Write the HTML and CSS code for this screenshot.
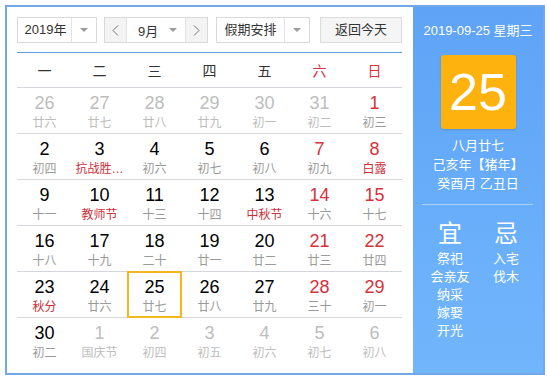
FILE: index.html
```html
<!DOCTYPE html>
<html lang="zh-CN">
<head>
    <meta charset="UTF-8">
    <title>万年历</title>
    <link rel="stylesheet" href="styles.css">
</head>
<body>
    <div class="calendar">
        <!-- Left: month grid -->
        <div class="main">
            <div class="toolbar">
                <div class="select year">
                    <span class="val">2019年</span>
                    <span class="drop"><i class="caret"></i></span>
                </div>
                <div class="month-ctl">
                    <span class="arrow">
                        <svg width="7" height="11" viewBox="0 0 7 11"><polyline points="6,0.5 1,5.5 6,10.5" fill="none" stroke="#777" stroke-width="1"/></svg>
                    </span>
                    <div class="month-val"><span>9月</span><i class="caret"></i></div>
                    <span class="arrow">
                        <svg width="7" height="11" viewBox="0 0 7 11"><polyline points="1,0.5 6,5.5 1,10.5" fill="none" stroke="#777" stroke-width="1"/></svg>
                    </span>
                </div>
                <div class="select holiday">
                    <span class="val">假期安排</span>
                    <span class="drop"><i class="caret"></i></span>
                </div>
                <div class="today-btn">返回今天</div>
            </div>

            <div class="week">
                <span>一</span><span>二</span><span>三</span><span>四</span><span>五</span>
                <span class="red">六</span><span class="red">日</span>
            </div>

            <div class="row">
                <div class="day other"><b>26</b><em>廿六</em></div>
                <div class="day other"><b>27</b><em>廿七</em></div>
                <div class="day other"><b>28</b><em>廿八</em></div>
                <div class="day other"><b>29</b><em>廿九</em></div>
                <div class="day other"><b>30</b><em>初一</em></div>
                <div class="day other"><b>31</b><em>初二</em></div>
                <div class="day weekend"><b>1</b><em>初三</em></div>
            </div>
            <div class="row">
                <div class="day"><b>2</b><em>初四</em></div>
                <div class="day"><b>3</b><em class="fest">抗战胜…</em></div>
                <div class="day"><b>4</b><em>初六</em></div>
                <div class="day"><b>5</b><em>初七</em></div>
                <div class="day"><b>6</b><em>初八</em></div>
                <div class="day weekend"><b>7</b><em>初九</em></div>
                <div class="day weekend"><b>8</b><em class="fest">白露</em></div>
            </div>
            <div class="row">
                <div class="day"><b>9</b><em>十一</em></div>
                <div class="day"><b>10</b><em class="fest">教师节</em></div>
                <div class="day"><b>11</b><em>十三</em></div>
                <div class="day"><b>12</b><em>十四</em></div>
                <div class="day"><b>13</b><em class="fest">中秋节</em></div>
                <div class="day weekend"><b>14</b><em>十六</em></div>
                <div class="day weekend"><b>15</b><em>十七</em></div>
            </div>
            <div class="row">
                <div class="day"><b>16</b><em>十八</em></div>
                <div class="day"><b>17</b><em>十九</em></div>
                <div class="day"><b>18</b><em>二十</em></div>
                <div class="day"><b>19</b><em>廿一</em></div>
                <div class="day"><b>20</b><em>廿二</em></div>
                <div class="day weekend"><b>21</b><em>廿三</em></div>
                <div class="day weekend"><b>22</b><em>廿四</em></div>
            </div>
            <div class="row">
                <div class="day"><b>23</b><em class="fest">秋分</em></div>
                <div class="day"><b>24</b><em>廿六</em></div>
                <div class="day today"><b>25</b><em>廿七</em></div>
                <div class="day"><b>26</b><em>廿八</em></div>
                <div class="day"><b>27</b><em>廿九</em></div>
                <div class="day weekend"><b>28</b><em>三十</em></div>
                <div class="day weekend"><b>29</b><em>初一</em></div>
            </div>
            <div class="row">
                <div class="day"><b>30</b><em>初二</em></div>
                <div class="day other"><b>1</b><em>国庆节</em></div>
                <div class="day other"><b>2</b><em>初四</em></div>
                <div class="day other"><b>3</b><em>初五</em></div>
                <div class="day other"><b>4</b><em>初六</em></div>
                <div class="day other"><b>5</b><em>初七</em></div>
                <div class="day other"><b>6</b><em>初八</em></div>
            </div>
        </div>

        <!-- Right: selected day detail -->
        <div class="side">
            <div class="side-date">2019-09-25 星期三</div>
            <div class="big-day">25</div>
            <div class="lunar">
                <p>八月廿七</p>
                <p>己亥年【猪年】</p>
                <p>癸酉月 乙丑日</p>
            </div>
            <div class="divider"></div>
            <div class="yiji">
                <div class="col">
                    <h3>宜</h3>
                    <p>祭祀</p>
                    <p>会亲友</p>
                    <p>纳采</p>
                    <p>嫁娶</p>
                    <p>开光</p>
                </div>
                <div class="col">
                    <h3>忌</h3>
                    <p>入宅</p>
                    <p>伐木</p>
                </div>
            </div>
        </div>
    </div>
</body>
</html>
```

FILE: styles.css
```css
body {
    margin: 0;
    padding: 0;
    background-color: #fff;
    font-family: "Liberation Sans", Arial, "Noto Sans CJK SC", sans-serif;
    color: #333;
}
.calendar {
    display: flex;
    width: 540px;
    height: 370px;
    margin: 5px;
    border: 2px solid #72a8ea;
    box-sizing: border-box;
}
.main {
    width: 406px;
    padding: 10px 11px 0 10px;
    box-sizing: border-box;
    background-color: #fff;
}

/* toolbar */
.toolbar {
    display: flex;
    height: 26px;
    margin-bottom: 9px;
    font-size: 13px;
    color: #333;
}
.select {
    display: flex;
    border: 1px solid #d9d9d9;
    box-sizing: border-box;
    background-color: #fff;
}
.select .val {
    flex: 1;
    line-height: 24px;
    text-align: center;
}
.select .drop {
    width: 24px;
    border-left: 1px solid #e3e3e3;
    display: flex;
    align-items: center;
    justify-content: center;
}
.caret {
    display: block;
    width: 0;
    height: 0;
    border-left: 4px solid transparent;
    border-right: 4px solid transparent;
    border-top: 4px solid #9a9a9a;
}
.year {
    width: 80px;
    margin-right: 7px;
}
.year .val {
    padding-left: 2px;
}
.month-ctl {
    display: flex;
    width: 104px;
    border: 1px solid #d9d9d9;
    box-sizing: border-box;
    margin-right: 8px;
}
.month-ctl .arrow {
    width: 21px;
    background-color: #f4f4f4;
    display: flex;
    align-items: center;
    justify-content: center;
}
.month-val {
    flex: 1;
    display: flex;
    align-items: center;
    justify-content: space-between;
    padding: 0 8px 0 11px;
    border-left: 1px solid #e3e3e3;
    border-right: 1px solid #e3e3e3;
}
.holiday {
    width: 94px;
    margin-right: 10px;
}
.today-btn {
    width: 82px;
    border: 1px solid #dcdcdc;
    box-sizing: border-box;
    background-color: #f5f5f5;
    line-height: 24px;
    text-align: center;
}

/* grid */
.week {
    display: flex;
    height: 34px;
    border-top: 1px solid #5b9de6;
    align-items: center;
    font-size: 14px;
    color: #333;
}
.week span {
    flex: 1;
    text-align: center;
}
.week .red {
    color: #d7313b;
}
.row {
    display: flex;
    border-top: 1px solid #d3d6da;
    height: 45px;
}
.day {
    flex: 1;
    display: flex;
    flex-direction: column;
    align-items: center;
    padding-top: 5px;
    box-sizing: border-box;
    min-width: 0;
}
.day b {
    font-weight: normal;
    font-size: 18px;
    line-height: 20px;
    color: #000;
}
.day em {
    font-style: normal;
    font-size: 12px;
    line-height: 16px;
    margin-top: 2px;
    color: #9a9a9a;
    white-space: nowrap;
}
.day.weekend b {
    color: #d7313b;
}
.day em.fest {
    color: #c9303a;
}
.day.other b,
.day.other em {
    color: #bdbdbd;
}
.day.today {
    box-shadow: inset 0 0 0 2px #f4b81f;
    margin: -1px 0;
    height: 47px;
    padding-top: 6px;
}

/* side panel */
.side {
    flex: 1;
    background: linear-gradient(#5ea3f6, #71b6fc);
    color: #fff;
    text-align: center;
    padding-top: 14px;
}
.side-date {
    font-size: 13px;
    line-height: 20px;
}
.big-day {
    width: 75px;
    height: 74px;
    margin: 14px auto 0;
    background-color: #fdb20e;
    border-radius: 3px;
    box-shadow: 0 1px 2px rgba(0, 0, 0, 0.15);
    font-size: 52px;
    line-height: 74px;
}
.lunar {
    margin-top: 7px;
    font-size: 13px;
}
.lunar p {
    margin: 0;
    line-height: 19px;
}
.divider {
    height: 1px;
    margin: 11px 10px 0 9px;
    background-color: rgba(255, 255, 255, 0.45);
}
.yiji {
    display: flex;
    justify-content: center;
    margin-top: 15px;
}
.yiji .col {
    width: 56px;
}
.yiji h3 {
    margin: 0 0 2px;
    font-size: 24px;
    font-weight: normal;
    line-height: 28px;
}
.yiji p {
    margin: 0;
    font-size: 13px;
    line-height: 18px;
}
```
